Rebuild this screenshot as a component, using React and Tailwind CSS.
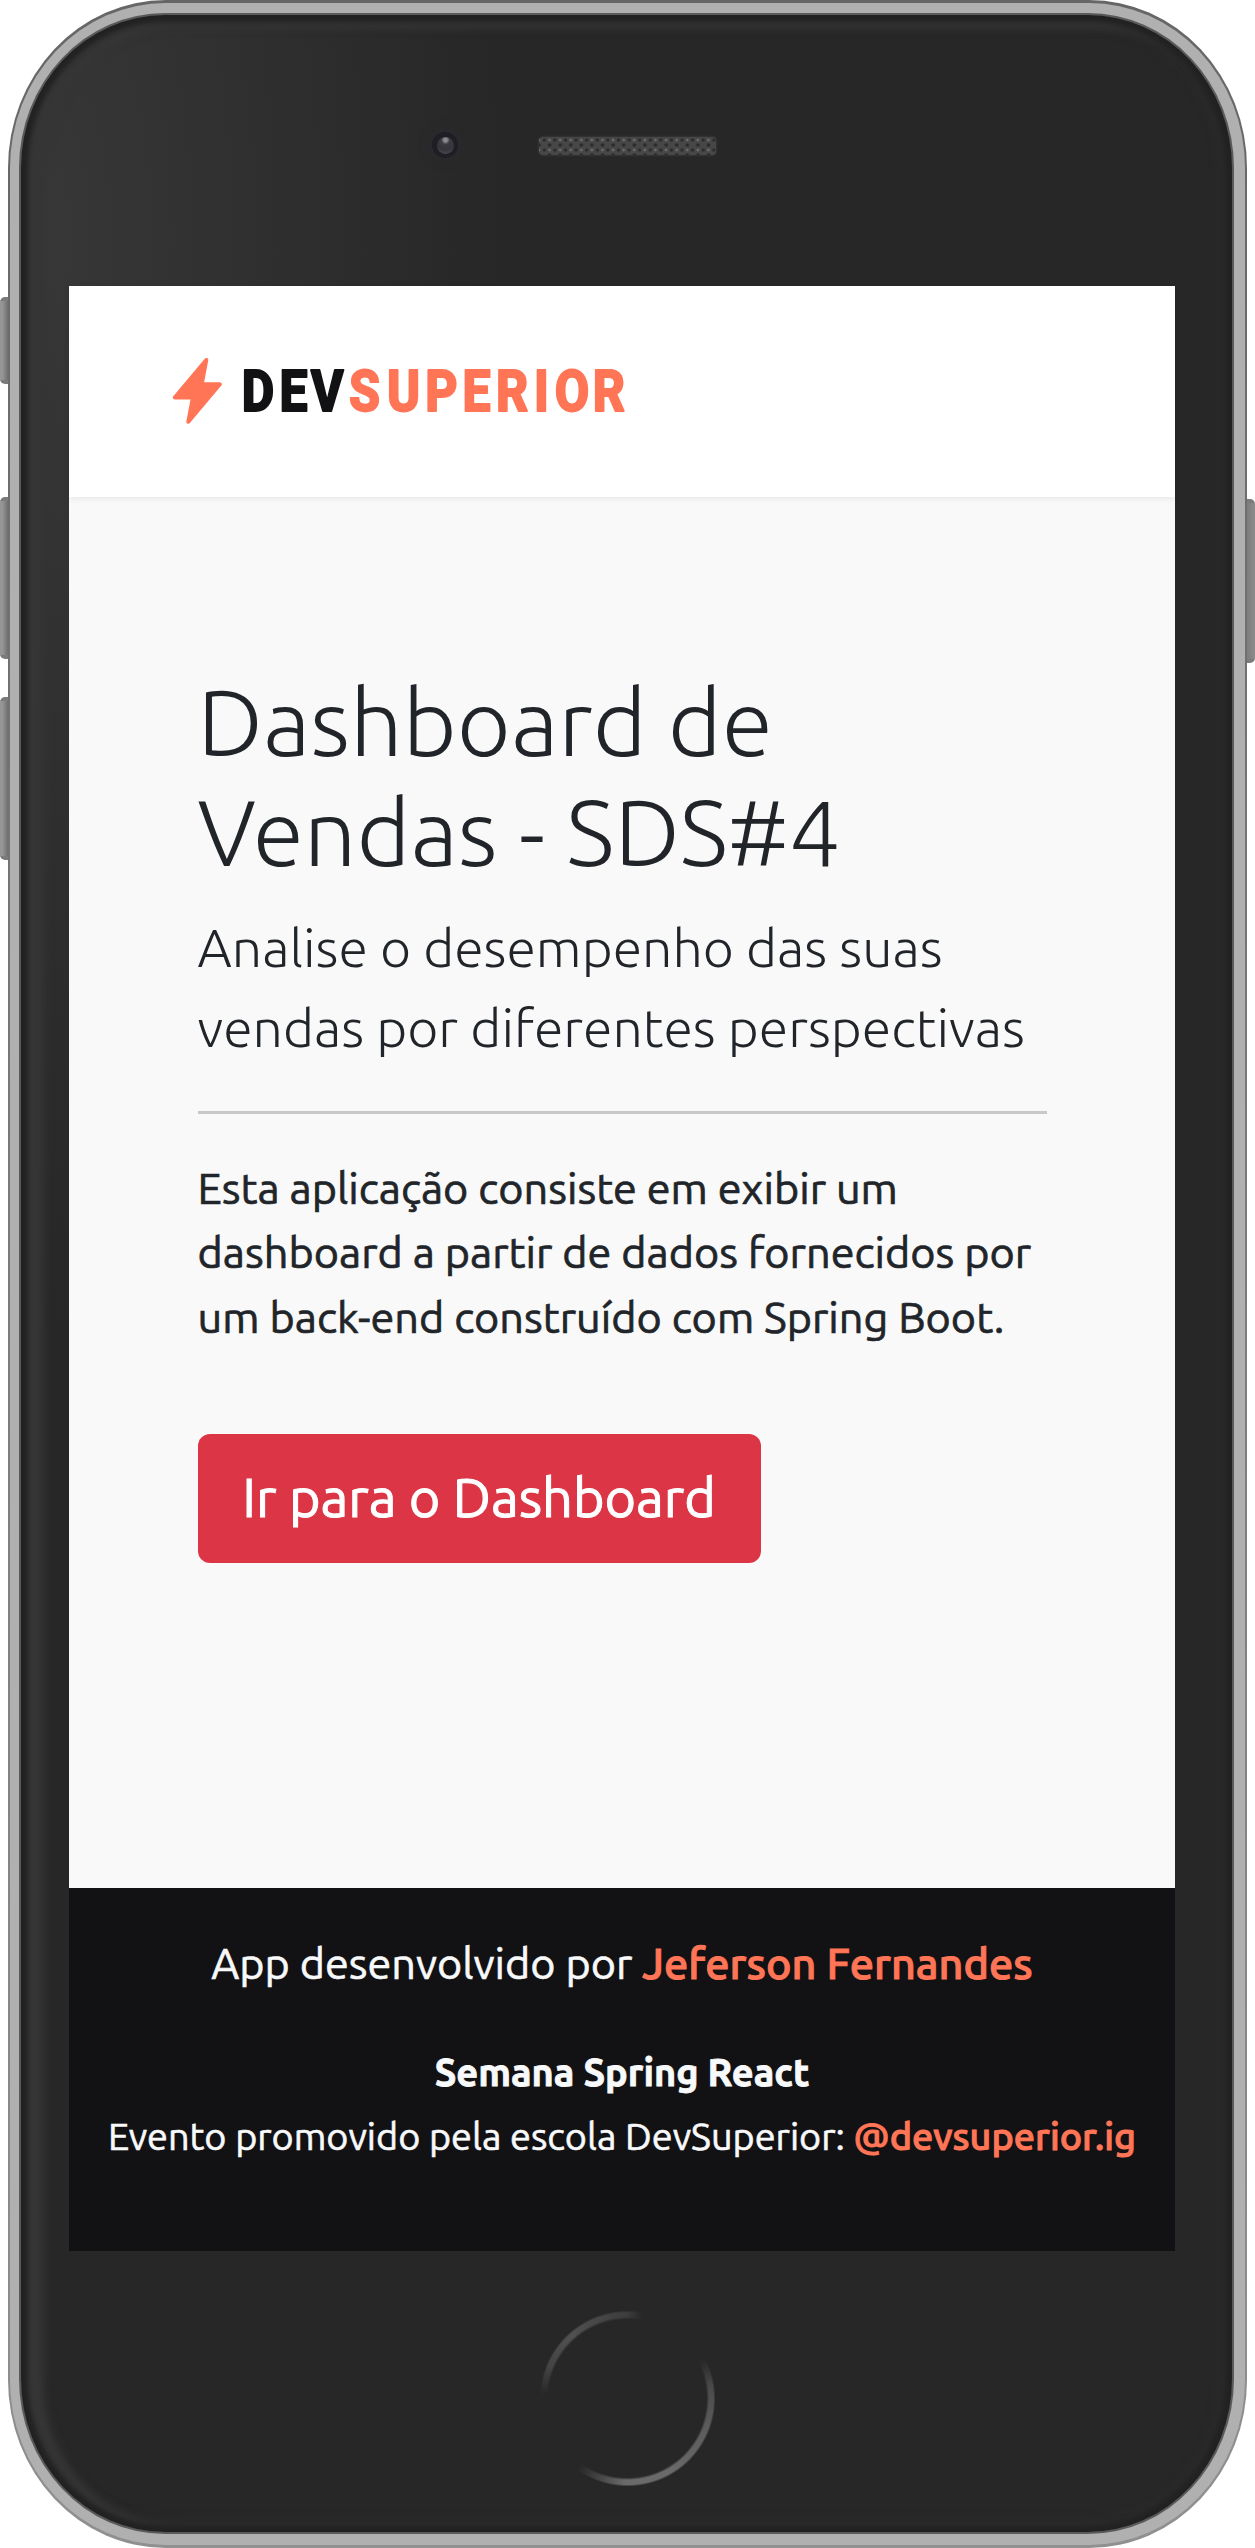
function SideButton({ side, className }) {
  const tone =
    side === 'left'
      ? 'rounded-l-[5px] bg-linear-to-r from-[#969696] from-30% to-[#6f6f6f]'
      : 'rounded-r-[5px] bg-linear-to-r from-[#7c7c7c] to-[#8c8c8c]';
  return <div className={`w-full border-y-4 border-[#7b7b7b] ${tone} ${className}`} />;
}

function Logo() {
  return (
    <svg width="460" height="70" viewBox="0 0 460 70" aria-label="DevSuperior">
      <path
        d="M34.3 4 2.8 41.5H20.9L16.3 65.8 47.8 28.3H29.7Z"
        fill="#ff7556"
        stroke="#ff7556"
        strokeWidth="4"
        strokeLinejoin="round"
      />
      <g
        transform="scale(.87 1)"
        fontFamily="Roboto, sans-serif"
        fontSize="57.5"
        fontWeight="800"
        strokeWidth="1.8"
        strokeLinejoin="round"
      >
        <text y="55" x="80.2 123.6 159.4" fill="#121214" stroke="#121214">
          DEV
        </text>
        <text y="55" x="203.6 247 291 334 372.5 416 440 483.6" fill="#ff7556" stroke="#ff7556">
          SUPERIOR
        </text>
      </g>
    </svg>
  );
}

function TopBezel() {
  return (
    <div className="relative h-[286px] w-full shrink-0">
      {/* front camera */}
      <div className="absolute left-[363px] top-[132px] flex size-[26px] items-center justify-center rounded-full bg-[#1f1e25] shadow-[0_0_8px_4px_rgba(44,43,52,0.6)]">
        <div className="size-[17px] rounded-full bg-[radial-gradient(circle_at_50%_18%,#8a8a90_0_10%,#3c3b42_26%,#35343b_60%,#55545a_100%)]" />
      </div>
      {/* earpiece */}
      <div className="absolute left-[470px] top-[137px] h-[18px] w-[177px] rounded-[4px] bg-[#474747] bg-[radial-gradient(circle,#2a2a2a_0_1px,transparent_2.4px),radial-gradient(circle,#2a2a2a_0_1px,transparent_2.4px),radial-gradient(circle,#6c6c6c_0_0.8px,transparent_1.8px)] bg-[length:10.6px_10px,10.6px_10px,5.3px_10px] bg-[position:0_-2px,5.3px_3px,2.6px_-2px] shadow-[0_0_2px_1px_#363636]" />
    </div>
  );
}

function HomeButton() {
  return (
    <div className="flex w-full justify-center pt-[59px]">
      <div className="ml-[10px] size-[177px] rounded-full bg-[conic-gradient(from_0deg,#3c3c3c_0deg,transparent_11deg,transparent_62deg,#4a4a4a_82deg,#5c5c5c_110deg,#6a6a6a_150deg,#6a6a6a_182deg,#404040_202deg,transparent_216deg,transparent_272deg,#444_292deg,#505050_318deg,#444_345deg,#3c3c3c_360deg)] mask-[radial-gradient(circle,transparent_79px,#000_81.5px,#000_86px,transparent_88px)]" />
    </div>
  );
}

function Screen() {
  return (
    <div className="flex h-[1965px] w-[1106px] shrink-0 flex-col bg-[#f9f9f9] text-[#212529]">
      <header className="flex h-[211px] shrink-0 items-start bg-white pl-[103px] pt-[70px] shadow-[0_2px_6px_rgba(0,0,0,0.07)]">
        <Logo />
      </header>

      <main className="flex flex-1 flex-col items-start pl-[128.6px] pr-[128px] pt-[170px]">
        <h1 className="text-[93.2px] font-light leading-[110px]">
          Dashboard de
          <br />
          Vendas - SDS#4
        </h1>
        <p className="mt-[20px] whitespace-nowrap text-[53.6px] font-light leading-[80px]">
          Analise o desempenho das suas
          <br />
          vendas por diferentes perspectivas
        </p>
        <hr className="mt-[44px] h-[3px] w-full border-0 bg-[#c8c8c8]" />
        <p className="mt-[42px] whitespace-nowrap text-[43.2px] leading-[64.3px] [-webkit-text-stroke:0.7px_#212529]">
          Esta aplicação consiste em exibir um
          <br />
          dashboard a partir de dados fornecidos por
          <br />
          um back-end construído com Spring Boot.
        </p>
        <button className="mt-[85px] flex h-[129px] w-[563px] items-center justify-center whitespace-nowrap rounded-[12px] bg-[#dc3545] pb-[2px] text-[54px] leading-none text-white [-webkit-text-stroke:1px_white]">
          Ir para o Dashboard
        </button>
      </main>

      <footer className="h-[363px] shrink-0 whitespace-nowrap bg-[#121214] pt-[43px] text-center leading-[64px] text-[#f8f9fa] [-webkit-text-stroke:0.6px_currentColor]">
        <p className="text-[43.2px]">
          App desenvolvido por{' '}
          <a className="font-medium text-[#ff7556] [-webkit-text-stroke:1px_#ff7556]">Jeferson Fernandes</a>
        </p>
        <p className="mt-[45px] text-[38px] font-bold [-webkit-text-stroke:0.8px_#f8f9fa]">Semana Spring React</p>
        <p className="text-[37.85px]">
          Evento promovido pela escola DevSuperior:{' '}
          <a className="font-medium text-[#ff7556] [-webkit-text-stroke:1px_#ff7556]">@devsuperior.ig</a>
        </p>
      </footer>
    </div>
  );
}

export default function App() {
  return (
    <div className="flex h-[2548px] w-[1255px] overflow-hidden bg-white font-[Ubuntu,'Noto_Sans',sans-serif]">
      <div className="w-[8px] shrink-0 pt-[297px]">
        <SideButton side="left" className="h-[87px]" />
        <SideButton side="left" className="mt-[113px] h-[162px]" />
        <SideButton side="left" className="mt-[38px] h-[163px]" />
      </div>

      {/* metal rim: dark hairline, silver band, inner hairline */}
      <div className="h-[2548px] w-[1239px] shrink-0 rounded-[158px/168px] bg-linear-to-b from-[#666] to-[#909090] px-[2px] pb-[3px] pt-[3px]">
        <div className="h-full w-full rounded-[156px/165px] bg-[#b0b0b0] pb-[11px] pl-[9px] pr-[11px] pt-[10px]">
          <div className="h-full w-full rounded-[146px/155px] bg-[#5a5a5a] p-[2px]">
            <div className="flex h-full w-full flex-col items-center rounded-[144px/153px] bg-[#272727] bg-[radial-gradient(ellipse_480px_1100px_at_0_220px,#383838_0,#303030_45%,transparent_100%)] shadow-[inset_0_0_5px_7px_#222,inset_14px_4px_8px_9px_#363636,inset_0_0_10px_12px_#2c2c2c]">
              <div className="-mt-[15px] mr-[9px] flex flex-col items-center">
                <TopBezel />
                <Screen />
                <HomeButton />
              </div>
            </div>
          </div>
        </div>
      </div>

      <div className="w-[8px] shrink-0 pt-[499px]">
        <SideButton side="right" className="h-[164px]" />
      </div>
    </div>
  );
}
